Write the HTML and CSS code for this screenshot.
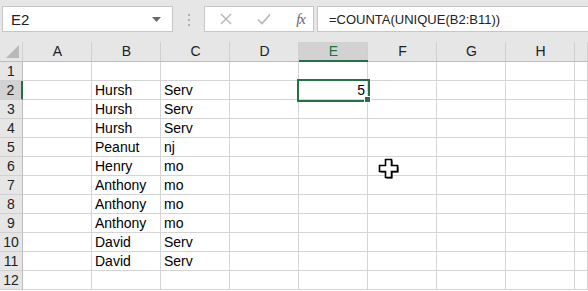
FILE: index.html
```html
<!DOCTYPE html>
<html lang="en">
<head>
    <meta charset="UTF-8">
    <title>Sheet</title>
    <link rel="stylesheet" href="styles.css">
</head>
<body>

    <!-- Formula bar -->
    <div class="topbar">
        <div class="name-box">
            <span>E2</span>
            <svg class="drop" width="9" height="5" viewBox="0 0 9 5"><path d="M0 0h9L4.5 5z" fill="#6a6a6a"/></svg>
        </div>
        <div class="grip"><i></i><i></i><i></i></div>
        <div class="fx-box">
            <svg width="12" height="12" viewBox="0 0 12 12"><path d="M1 1l10 10M11 1L1 11" stroke="#b5b5b5" stroke-width="1.4" fill="none"/></svg>
            <svg width="14" height="12" viewBox="0 0 14 12"><path d="M1 6.5l4 4L13 1.5" stroke="#b5b5b5" stroke-width="1.6" fill="none"/></svg>
            <span class="fx">fx</span>
        </div>
        <div class="formula">=COUNTA(UNIQUE(B2:B11))</div>
    </div>

    <!-- Grid -->
    <div class="grid" id="grid">
        <div class="corner"><svg width="13" height="13" viewBox="0 0 13 13"><path d="M13 0v13H0z" fill="#b9b9b9"/></svg></div>
        <div class="col-head">A</div>
        <div class="col-head">B</div>
        <div class="col-head">C</div>
        <div class="col-head">D</div>
        <div class="col-head active">E</div>
        <div class="col-head">F</div>
        <div class="col-head">G</div>
        <div class="col-head">H</div>
        <div class="col-head"></div>
    </div>

    <svg class="cursor" width="22" height="22" viewBox="0 0 22 22">
        <path d="M8.5 2.5h6v6h6v6h-6v6h-6v-6h-6v-6h6z" fill="#000"/>
        <path d="M7.5 1.5h6v6h6v6h-6v6h-6v-6h-6v-6h6z" fill="#fff" stroke="#000" stroke-width="1.6"/>
    </svg>

    <script>
        const data = [
            ['', ''],
            ['Hursh', 'Serv'],
            ['Hursh', 'Serv'],
            ['Hursh', 'Serv'],
            ['Peanut', 'nj'],
            ['Henry', 'mo'],
            ['Anthony', 'mo'],
            ['Anthony', 'mo'],
            ['Anthony', 'mo'],
            ['David', 'Serv'],
            ['David', 'Serv'],
            ['', '']
        ];

        const grid = document.getElementById('grid');

        data.forEach(function(row, i) {
            const num = document.createElement('div');
            num.className = i === 1 ? 'row-head active' : 'row-head';
            num.textContent = i + 1;
            grid.appendChild(num);

            for (let c = 0; c < 9; c++) {
                const cell = document.createElement('div');
                cell.className = 'cell';
                if (c === 1) cell.textContent = row[0];
                if (c === 2) cell.textContent = row[1];
                if (c === 4 && i === 1) {
                    cell.className = 'cell selected';
                    cell.textContent = '5';
                }
                grid.appendChild(cell);
            }
        });
    </script>

</body>
</html>
```

FILE: styles.css
```css
body {
    margin: 0;
    width: 588px;
    height: 291px;
    overflow: hidden;
    background-color: #ffffff;
    font-family: "Liberation Sans", Arial, sans-serif;
    position: relative;
}
.topbar {
    height: 42px;
    background-color: #e6e6e6;
    display: flex;
    align-items: flex-start;
    padding: 6px 0 0 2px;
    box-sizing: border-box;
}
.name-box {
    width: 171px;
    height: 26px;
    box-sizing: border-box;
    background-color: #ffffff;
    border: 1px solid #c6c6c6;
    display: flex;
    align-items: center;
    justify-content: space-between;
    padding: 0 11px 0 8px;
    font-size: 15px;
    color: #222;
}
.grip {
    width: 31px;
    display: flex;
    flex-direction: column;
    align-items: center;
    gap: 3px;
    padding-top: 8px;
}
.grip i {
    width: 2px;
    height: 2px;
    background-color: #b0b0b0;
}
.fx-box {
    width: 110px;
    height: 26px;
    box-sizing: border-box;
    background-color: #ffffff;
    border: 1px solid #c6c6c6;
    display: flex;
    align-items: center;
    justify-content: space-between;
    padding: 0 8px 0 15px;
}
.fx {
    font-family: "Liberation Serif", serif;
    font-style: italic;
    font-size: 15px;
    color: #666;
    letter-spacing: -1px;
}
.formula {
    flex: 1;
    height: 26px;
    margin-left: 3px;
    box-sizing: border-box;
    background-color: #ffffff;
    border: 1px solid #c6c6c6;
    border-right: none;
    padding: 4px 0 0 11px;
    font-size: 13px;
    line-height: 17px;
    color: #222;
}
.grid {
    display: grid;
    grid-template-columns: 23px repeat(8, 69px) 13px;
    grid-template-rows: 20px repeat(12, 19px);
}
.corner,
.col-head {
    background-color: #e6e6e6;
    border-bottom: 1px solid #bdbdbd;
    background-image: linear-gradient(#d0d0d0, #d0d0d0);
    background-size: 1px 100%;
    background-position: right top;
    background-repeat: no-repeat;
    box-sizing: border-box;
}
.corner {
    display: flex;
    align-items: flex-end;
    justify-content: flex-end;
    padding: 0 4px 3px 0;
}
.col-head {
    text-align: center;
    font-size: 14px;
    line-height: 19px;
    color: #222;
}
.col-head.active {
    background-color: #d2d2d2;
    border-bottom: 2px solid #217346;
    color: #217346;
}
.row-head {
    background-color: #e6e6e6;
    border-right: 1px solid #bdbdbd;
    border-bottom: 1px solid #d0d0d0;
    box-sizing: border-box;
    font-size: 14px;
    line-height: 18px;
    text-align: center;
    color: #222;
}
.row-head.active {
    background-color: #d2d2d2;
    border-right: 2px solid #217346;
}
.cell {
    border-right: 1px solid #d4d4d4;
    border-bottom: 1px solid #d4d4d4;
    box-sizing: border-box;
    font-size: 14px;
    line-height: 18px;
    padding-left: 3px;
    white-space: nowrap;
    overflow: hidden;
    color: #000;
}
.cell.selected {
    text-align: right;
    padding-right: 2px;
    outline: 2px solid #217346;
    outline-offset: 0;
    position: relative;
    overflow: visible;
}
.cell.selected::after {
    content: "";
    position: absolute;
    right: -4px;
    bottom: -4px;
    width: 5px;
    height: 5px;
    background-color: #217346;
    border: 1px solid #ffffff;
}
.cursor {
    position: absolute;
    left: 378px;
    top: 158px;
}
```
